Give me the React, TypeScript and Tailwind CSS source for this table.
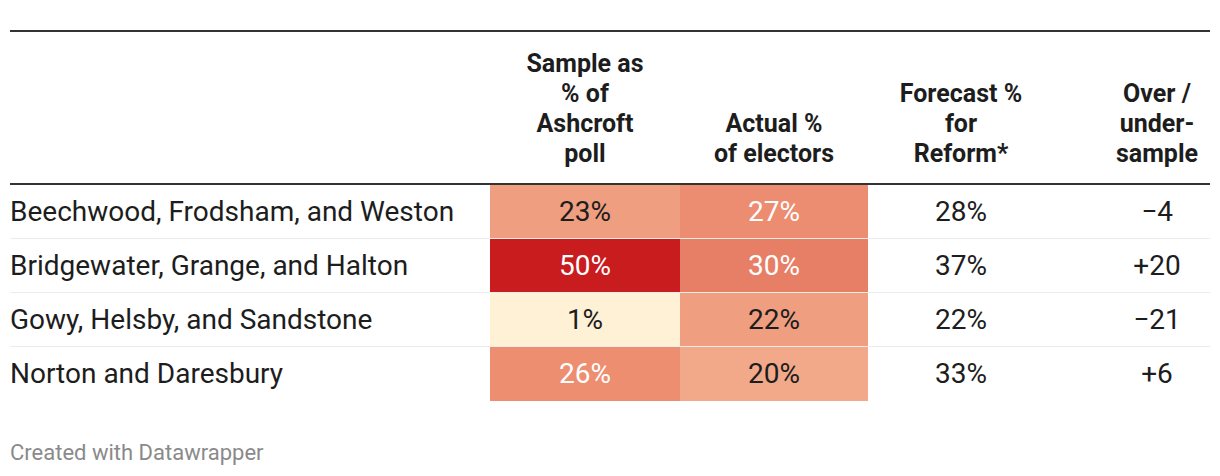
const rows = [
  {
    name: 'Beechwood, Frodsham, and Weston',
    sample: { v: '23%', bg: 'bg-[#ef9e7f]', light: false },
    actual: { v: '27%', bg: 'bg-[#ec8c70]', light: true },
    forecast: '28%',
    diff: '−4',
  },
  {
    name: 'Bridgewater, Grange, and Halton',
    sample: { v: '50%', bg: 'bg-[#c81c1e]', light: true },
    actual: { v: '30%', bg: 'bg-[#e77f66]', light: true },
    forecast: '37%',
    diff: '+20',
  },
  {
    name: 'Gowy, Helsby, and Sandstone',
    sample: { v: '1%', bg: 'bg-[#fef1d6]', light: false },
    actual: { v: '22%', bg: 'bg-[#ef9f80]', light: false },
    forecast: '22%',
    diff: '−21',
  },
  {
    name: 'Norton and Daresbury',
    sample: { v: '26%', bg: 'bg-[#ed8e71]', light: true },
    actual: { v: '20%', bg: 'bg-[#f2a98a]', light: false },
    forecast: '33%',
    diff: '+6',
  },
];

const grid = 'grid grid-cols-[480px_190px_188px_186px_156px]';

export default function App() {
  return (
    <div className="w-[1220px] h-[476px] bg-white px-[10px] pt-[30px] font-['Roboto',sans-serif] text-[#1d1d1d]">
      <div className={`${grid} border-t-2 border-b-2 border-[#333] pt-[17px] pb-[14px] text-[25px] font-bold leading-[30px]`}>
        <div />
        <div className="flex items-end justify-center text-center">
          <span>
            Sample as
            <br />% of
            <br />
            Ashcroft
            <br />
            poll
          </span>
        </div>
        <div className="flex items-end justify-center text-center">
          <span>
            Actual %
            <br />
            of electors
          </span>
        </div>
        <div className="flex items-end justify-center text-center">
          <span>
            Forecast %
            <br />
            for
            <br />
            Reform*
          </span>
        </div>
        <div className="flex items-end justify-center pl-[50px] text-center">
          <span>
            Over /
            <br />
            under-
            <br />
            sample
          </span>
        </div>
      </div>
      {rows.map((r, i) => (
        <div
          key={r.name}
          className={`${grid} h-[54px] text-[28px] ${i < rows.length - 1 ? 'border-b border-[#ececec]' : ''}`}
        >
          <div className="flex items-center">{r.name}</div>
          <div
            className={`flex items-center justify-center ${r.sample.bg} ${r.sample.light ? 'text-white' : ''}`}
          >
            {r.sample.v}
          </div>
          <div
            className={`flex items-center justify-center ${r.actual.bg} ${r.actual.light ? 'text-white' : ''}`}
          >
            {r.actual.v}
          </div>
          <div className="flex items-center justify-center">{r.forecast}</div>
          <div className="flex items-center justify-center pl-[50px]">{r.diff}</div>
        </div>
      ))}
      <div className="mt-[38px] text-[22px] leading-[28px] text-[#8a8a8a]">Created with Datawrapper</div>
    </div>
  );
}
